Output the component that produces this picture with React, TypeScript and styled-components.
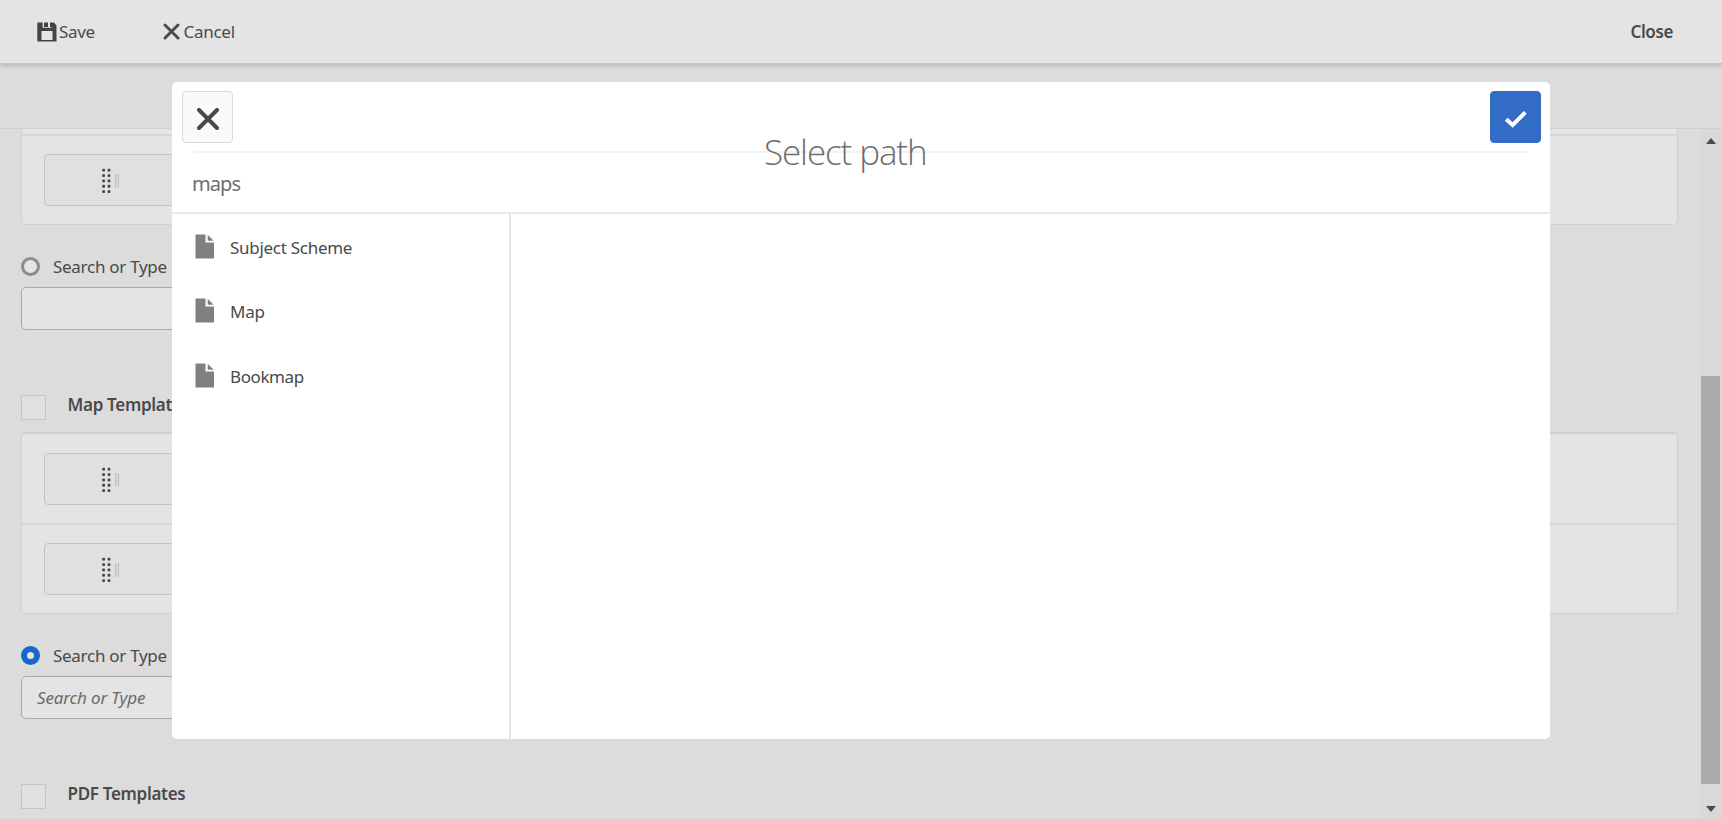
import { useState } from 'react';
import styled, { createGlobalStyle } from 'styled-components';

const GlobalStyle = createGlobalStyle`
  * {
    box-sizing: border-box;
  }

  body {
    margin: 0;
    overflow: hidden;
    font-family: 'Noto Sans', 'Open Sans', sans-serif;
    font-size: 17px;
    color: #4a4a4a;
    background: #dcdcdc;
  }
`;

const Page = styled.div`
  display: flex;
  flex-direction: column;
  height: 100vh;
  overflow: hidden;
`;

const Header = styled.header`
  display: flex;
  flex: none;
  align-items: center;
  justify-content: space-between;
  height: 64px;
  padding: 0 49px 0 37px;
  background: #e4e4e4;
  border-bottom: 1px solid #c4c4c4;
  box-shadow: 0 1px 5px rgba(0, 0, 0, 0.22);
  z-index: 1;
`;

const HeaderActions = styled.div`
  display: flex;
  gap: 68px;
`;

const HeaderButton = styled.button<{ $gap: number }>`
  display: flex;
  align-items: center;
  gap: ${({ $gap }) => $gap}px;
  padding: 0;
  border: 0;
  background: none;
  font: inherit;
  color: inherit;
`;

const Text = styled.span<{ $spacing?: number; $bold?: boolean }>`
  line-height: 24px;
  white-space: nowrap;
  font-weight: ${({ $bold }) => ($bold ? 600 : 400)};
  letter-spacing: ${({ $spacing = 0 }) => $spacing}px;
`;

const SubHeader = styled.div`
  flex: none;
  height: 65px;
  border-bottom: 1px solid #d0d0d0;
`;

const Body = styled.div`
  display: flex;
  flex: 1;
  min-height: 0;
`;

const Form = styled.main`
  flex: 1;
  padding: 0 22px 0 21px;
  overflow: hidden;
`;

const Panel = styled.div<{ $cut?: boolean }>`
  border: 1px solid #d0d0d0;
  border-top-width: ${({ $cut }) => ($cut ? 0 : 2)}px;
  border-radius: ${({ $cut }) => ($cut ? '0 0 5px 5px' : '5px')};
  padding-top: ${({ $cut }) => ($cut ? 5 : 0)}px;
  background: #e4e4e4;
`;

const PanelRow = styled.div<{ $ruled?: boolean }>`
  height: ${({ $ruled }) => ($ruled ? 90 : 89)}px;
  padding: ${({ $ruled }) => ($ruled ? 18 : 19)}px 22px 0;
  border-top: ${({ $ruled }) => ($ruled ? '2px solid #d6d6d6' : 'none')};
`;

const DragItem = styled.div`
  display: flex;
  align-items: center;
  width: 556px;
  height: 52px;
  padding: 2px 0 0 56px;
  border: 1px solid #c3c3c3;
  border-radius: 4px;
  background: #e0e0e0;
`;

const RadioRow = styled.label`
  display: flex;
  align-items: center;
  gap: 13px;
  height: 24px;
  margin: 29px 0 9px;
`;

const RadioText = styled(Text)`
  padding-top: 1px;
`;

const Radio = styled.span<{ $checked?: boolean }>`
  width: 19px;
  height: 19px;
  border: ${({ $checked }) => ($checked ? '6px solid #1768cd' : '3px solid #8c8c8c')};
  border-radius: 50%;
  background: #e4e4e4;
`;

const PathInput = styled.input`
  display: block;
  width: 600px;
  height: 43px;
  padding: 0 15px 1px;
  border: 1px solid #a9a9a9;
  border-radius: 5px;
  background: #e4e4e4;
  font: inherit;
  font-style: italic;
  letter-spacing: -0.15px;

  &::placeholder {
    color: #6b6b6b;
    opacity: 1;
  }
`;

const CheckRow = styled.label`
  display: flex;
  gap: 21.5px;
  height: 25px;
  margin: 65px 0 12px;
`;

const CheckBox = styled.span`
  width: 25px;
  height: 25px;
  border: 1px solid #c5c5c5;
  background: #e0e0e0;
`;

const CheckLabel = styled(Text)`
  margin-top: -1.5px;
  line-height: 22px;
`;

const ScrollTrack = styled.div`
  display: flex;
  flex-direction: column;
  align-items: center;
  width: 22px;
  padding: 9px 1px 7px 0;
  background: #d9d9d9;
`;

const ScrollThumb = styled.div`
  width: 19px;
  height: 408px;
  margin: 232px 0 22px;
  background: #ababab;
`;

const Modal = styled.section`
  position: absolute;
  top: 82px;
  left: 172px;
  z-index: 2;
  display: flex;
  flex-direction: column;
  width: 1378px;
  height: 657px;
  border-radius: 5px;
  background: #fff;
  overflow: hidden;
`;

const ModalTop = styled.div`
  display: flex;
  flex: none;
  justify-content: space-between;
  height: 69px;
  padding: 9px 9px 0 10px;
`;

const ModalButton = styled.button<{ $primary?: boolean }>`
  display: grid;
  place-items: center;
  width: 51px;
  height: 52px;
  padding: 4px 0 0;
  border: 1px solid ${({ $primary }) => ($primary ? '#326cc7' : '#dadada')};
  border-radius: 4px;
  background: ${({ $primary }) => ($primary ? '#326cc7' : '#fafafa')};
`;

const ModalRule = styled.hr`
  flex: none;
  width: 1334px;
  height: 2px;
  margin: 0 0 0 22px;
  border: 0;
  background: #f2f2f2;
`;

// The title sits on top of the rule below the toolbar
const ModalTitle = styled.h1`
  position: absolute;
  top: 46px;
  left: 592px;
  margin: 0;
  font-family: 'Open Sans', 'Noto Sans', sans-serif;
  font-size: 35px;
  font-weight: 300;
  line-height: 48px;
  letter-spacing: -1.1px;
  white-space: nowrap;
  color: #6e6e6e;
`;

const PathName = styled.div`
  flex: none;
  height: 61px;
  padding: 17px 0 0 20px;
  border-bottom: 2px solid #e9e9e9;
  font-size: 20px;
  line-height: 28px;
  letter-spacing: -0.9px;
  color: #6e6e6e;
`;

const Columns = styled.div`
  display: grid;
  grid-template-columns: 339px 1fr;
  flex: 1;
`;

const FileList = styled.ul`
  margin: 0;
  padding: 0;
  list-style: none;
  border-right: 2px solid #e6e6e6;
`;

const FileItem = styled.li`
  display: flex;
  align-items: center;
  gap: 15px;
  height: 64.6px;
  padding-left: 23px;
`;

const FileName = styled(Text)`
  padding-top: 2.5px;
`;

const SaveIcon = () => (
  <svg width="20" height="20" viewBox="0 0 20 20">
    <path
      fill="#444"
      fillRule="evenodd"
      d="M1 0.5h4.6v5.2h9V.5H17l2.5 3v16H1q-.7 0-.7-.7V1.2Q.3.5 1 .5zM4.5 9v9h11V9z"
    />
    <path fill="#444" d="M7 .5h4v4.5H7zM13 .5h2v4.5h-2z" />
  </svg>
);

const CrossIcon = ({ size, stroke }: { size: number; stroke: number }) => (
  <svg width={size} height={size} viewBox={`0 0 ${size} ${size}`}>
    <path
      d={`M2 2L${size - 2} ${size - 2}M${size - 2} 2L2 ${size - 2}`}
      stroke="#4a4a4a"
      strokeWidth={stroke}
      strokeLinecap="round"
    />
  </svg>
);

const CheckIcon = () => (
  <svg width="24" height="18" viewBox="0 0 24 18">
    <path d="M2.2 9.2L8.7 15L21.3 2.4" fill="none" stroke="#fff" strokeWidth="4" />
  </svg>
);

const FileIcon = () => (
  <svg width="20" height="25" viewBox="0 0 20 25">
    <path d="M1 0.5h9.5v8H19V24q0 .6-.6.6H1q-.5 0-.5-.6V1q0-.5.5-.5z" fill="#808080" />
    <path d="M12.7 .7l6 6h-6z" fill="#808080" />
  </svg>
);

const rows = [0, 1, 2, 3, 4];

const DragIcon = () => (
  <svg width="20" height="28" viewBox="0 0 20 28">
    {rows.map((row) => (
      <g key={row} fill="#444">
        <rect x="1.2" y={1.8 + row * 5.35} width="2.8" height="2.8" rx="0.9" />
        <rect x="6.6" y={1.8 + row * 5.35} width="2.8" height="2.8" rx="0.9" />
      </g>
    ))}
    <path
      d="M14.8 7.5v13M17.4 7.5v13"
      stroke="#b0b0b0"
      strokeWidth="1.2"
      strokeDasharray="1.6 0.5"
    />
  </svg>
);

const Arrow = ({ down }: { down?: boolean }) => (
  <svg width="10" height="6" viewBox="0 0 10 6">
    <path d={down ? 'M0 0h10L5 6z' : 'M0 6h10L5 0z'} fill="#4a4a4a" />
  </svg>
);

const files = [
  { name: 'Subject Scheme', spacing: -0.28 },
  { name: 'Map', spacing: -0.2 },
  { name: 'Bookmap', spacing: -0.4 },
];

const App = () => {
  const [search, setSearch] = useState('');
  const [mapSearch, setMapSearch] = useState('');

  return (
    <Page>
      <GlobalStyle />
      <Header>
        <HeaderActions>
          <HeaderButton $gap={2}>
            <SaveIcon />
            <Text $spacing={-0.3}>Save</Text>
          </HeaderButton>
          <HeaderButton $gap={3.5}>
            <CrossIcon size={17} stroke={2.9} />
            <Text $spacing={-0.25}>Cancel</Text>
          </HeaderButton>
        </HeaderActions>
        <HeaderButton $gap={0}>
          <Text $bold $spacing={-0.4}>Close</Text>
        </HeaderButton>
      </Header>
      <SubHeader />
      <Body>
        <Form>
          <Panel $cut>
            <PanelRow $ruled>
              <DragItem>
                <DragIcon />
              </DragItem>
            </PanelRow>
          </Panel>
          <RadioRow>
            <Radio />
            <RadioText $spacing={-0.28}>Search or Type</RadioText>
          </RadioRow>
          <PathInput value={search} onChange={(e) => setSearch(e.target.value)} />
          <CheckRow>
            <CheckBox />
            <CheckLabel $bold $spacing={-0.3}>Map Templates</CheckLabel>
          </CheckRow>
          <Panel>
            <PanelRow>
              <DragItem>
                <DragIcon />
              </DragItem>
            </PanelRow>
            <PanelRow $ruled>
              <DragItem>
                <DragIcon />
              </DragItem>
            </PanelRow>
          </Panel>
          <RadioRow>
            <Radio $checked />
            <RadioText $spacing={-0.28}>Search or Type</RadioText>
          </RadioRow>
          <PathInput
            placeholder="Search or Type"
            value={mapSearch}
            onChange={(e) => setMapSearch(e.target.value)}
          />
          <CheckRow>
            <CheckBox />
            <CheckLabel $bold $spacing={-0.3}>PDF Templates</CheckLabel>
          </CheckRow>
        </Form>
        <ScrollTrack>
          <Arrow />
          <ScrollThumb />
          <Arrow down />
        </ScrollTrack>
      </Body>
      <Modal>
        <ModalTop>
          <ModalButton aria-label="Cancel">
            <CrossIcon size={22} stroke={4} />
          </ModalButton>
          <ModalButton $primary aria-label="Confirm">
            <CheckIcon />
          </ModalButton>
        </ModalTop>
        <ModalRule />
        <ModalTitle>Select path</ModalTitle>
        <PathName>maps</PathName>
        <Columns>
          <FileList>
            {files.map((file) => (
              <FileItem key={file.name}>
                <FileIcon />
                <FileName $spacing={file.spacing}>{file.name}</FileName>
              </FileItem>
            ))}
          </FileList>
        </Columns>
      </Modal>
    </Page>
  );
};

export default App;
